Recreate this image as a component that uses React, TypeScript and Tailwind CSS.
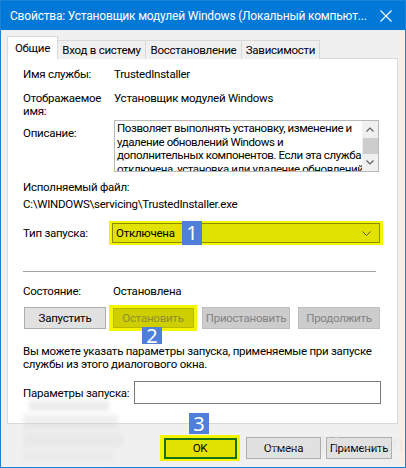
import React from "react";

const Badge = ({ n, className }: { n: string; className: string }) => (
  <div
    className={
      "absolute z-20 bg-[#4f7fd9] text-white text-[20px] leading-none flex items-center justify-center font-['Noto_Sans',sans-serif] tracking-normal " +
      className
    }
  >
    {n}
  </div>
);

const Btn = ({ label, disabled, className }: { label: string; disabled?: boolean; className: string }) => (
  <div
    className={
      "h-[22px] flex items-center justify-center border whitespace-nowrap " +
      (disabled
        ? "bg-[#cccccc] border-[#bfbfbf] text-[#838383] "
        : "bg-[#e1e1e1] border-[#adadad] text-black ") +
      className
    }
  >
    {label}
  </div>
);

export default function App() {
  return (
    <div className="w-[406px] h-[468px] bg-[#f0f0f0] border border-[#1883d7] flex flex-col relative overflow-hidden font-['Roboto',sans-serif] text-[11.5px] tracking-[-0.25px] text-black leading-[16px] whitespace-nowrap">
      {/* Title bar */}
      <div className="h-[29px] bg-[#0078d7] flex items-center justify-between pl-[9px] pr-[13px] text-white text-[12px] tracking-[-0.2px] shrink-0">
        <span className="whitespace-nowrap">Свойства: Установщик модулей Windows (Локальный компьют...</span>
        <svg width="12" height="12" viewBox="0 0 12 12" className="shrink-0">
          <path d="M0.5 0.5 L11.5 11.5 M11.5 0.5 L0.5 11.5" stroke="white" strokeWidth="1.1" />
        </svg>
      </div>

      {/* Body */}
      <div className="flex flex-col pl-[6px] pt-[6px]">
        {/* Tabs */}
        <div className="flex items-end h-[23px] relative z-10">
          <div className="w-[51px] h-[23px] bg-white border border-b-0 border-[#d9d9d9] flex items-start justify-center pt-[3px]">
            Общие
          </div>
          <div className="w-[88px] h-[19px] bg-[#f0f0f0] border border-l-0 border-b-0 border-[#d9d9d9] flex items-center justify-center">
            Вход в систему
          </div>
          <div className="w-[96px] h-[19px] bg-[#f0f0f0] border border-l-0 border-b-0 border-[#d9d9d9] flex items-center justify-center">
            Восстановление
          </div>
          <div className="w-[78px] h-[19px] bg-[#f0f0f0] border border-l-0 border-b-0 border-[#d9d9d9] flex items-center justify-center">
            Зависимости
          </div>
        </div>

        {/* Panel */}
        <div className="w-[391px] h-[366px] bg-white border border-[#d9d9d9] -mt-px flex flex-col pl-[15px] relative">
          {/* Имя службы */}
          <div className="flex mt-[7px] h-[16px] items-center">
            <div className="w-[91px]">Имя службы:</div>
            <div>TrustedInstaller</div>
          </div>
          {/* Отображаемое имя */}
          <div className="flex mt-[10px] leading-[13px]">
            <div className="w-[91px]">
              Отображаемое
              <br />
              имя:
            </div>
            <div>Установщик модулей Windows</div>
          </div>
          {/* Описание */}
          <div className="flex mt-[2px]">
            <div className="w-[91px] pt-[5px]">Описание:</div>
            <div className="w-[265px] h-[52px] border border-[#b9b9b9] flex overflow-hidden">
              <div className="flex-1 pl-[2px] pt-[1px] leading-[13.5px] tracking-[-0.4px] whitespace-nowrap overflow-hidden">
                Позволяет выполнять установку, изменение и
                <br />
                удаление обновлений Windows и
                <br />
                дополнительных компонентов. Если эта служба
                <br />
                отключена, установка или удаление обновлений
              </div>
              <div className="w-[16px] shrink-0 bg-[#f0f0f0] flex flex-col items-center">
                <div className="h-[17px] flex items-center justify-center">
                  <svg width="8" height="5" viewBox="0 0 8 5">
                    <path d="M0.5 4.5 L4 1 L7.5 4.5" stroke="#606060" strokeWidth="1.2" fill="none" />
                  </svg>
                </div>
                <div className="w-[15px] h-[17px] bg-[#cdcdcd]" />
                <div className="flex-1" />
                <div className="h-[17px] flex items-center justify-center">
                  <svg width="8" height="5" viewBox="0 0 8 5">
                    <path d="M0.5 0.5 L4 4 L7.5 0.5" stroke="#606060" strokeWidth="1.2" fill="none" />
                  </svg>
                </div>
              </div>
            </div>
          </div>
          {/* Исполняемый файл */}
          <div className="mt-[7px] h-[16px] flex items-center">Исполняемый файл:</div>
          <div className="mt-[1px] h-[16px] flex items-center">C:\WINDOWS\servicing\TrustedInstaller.exe</div>
          {/* Тип запуска */}
          <div className="flex items-center mt-[9px] h-[24px]">
            <div className="w-[86px]">Тип запуска:</div>
            <div className="w-[274px] h-[24px] bg-[#f5f500] px-[3px] py-[2px] relative">
              <div className="h-full bg-[#e2e200] border border-[#8c8c00] flex items-center justify-between pl-[3px] pr-[8px]">
                <span>Отключена</span>
                <svg width="9" height="5" viewBox="0 0 9 5">
                  <path d="M0.5 0.5 L4.5 4.5 L8.5 0.5" stroke="#5a5a20" strokeWidth="1" fill="none" />
                </svg>
              </div>
              <Badge n="1" className="left-[73px] top-[0px] w-[20px] h-[24px]" />
            </div>
          </div>
          {/* Separator */}
          <div className="mt-[26px] w-[353px] h-px bg-[#a0a0a0]" />
          {/* Состояние */}
          <div className="flex mt-[11px] h-[16px] items-center">
            <div className="w-[90px]">Состояние:</div>
            <div>Остановлена</div>
          </div>
          {/* Buttons */}
          <div className="flex items-center mt-[6px] h-[26px] relative">
            <Btn label="Запустить" className="w-[82px] ml-[1px]" />
            <div className="ml-[3px] w-[88px] h-[26px] bg-[#f5f500] flex items-center justify-center relative">
              <div className="w-[81px] h-[20px] bg-[#cfcf00] border border-[#b8b800] text-[#8e8e3a] flex items-center justify-center">
                Остановить
              </div>
              <Badge n="2" className="left-[33px] top-[22px] w-[20px] h-[17px] text-[18px]" />
            </div>
            <Btn label="Приостановить" disabled className="w-[88px] ml-[5px]" />
            <Btn label="Продолжить" disabled className="w-[82px] ml-[8px]" />
          </div>
          {/* Info text */}
          <div className="mt-[14px] leading-[13px]">
            Вы можете указать параметры запуска, применяемые при запуске
            <br />
            службы из этого диалогового окна.
          </div>
          {/* Параметры запуска */}
          <div className="flex items-center mt-[10px]">
            <div className="w-[111px]">Параметры запуска:</div>
            <div className="w-[247px] h-[23px] border border-[#7a7a7a] bg-white" />
          </div>
        </div>

        {/* Bottom buttons */}
        <div className="flex items-center mt-[11px] h-[26px] relative">
          <div className="ml-[153px] w-[80px] h-[26px] bg-[#f5f500] flex items-center justify-center relative">
            <div className="w-[73px] h-[21px] bg-[#e2e200] border-2 border-[#176f17] flex items-center justify-center">
              OK
            </div>
            <Badge n="3" className="left-[29px] top-[-22px] w-[20px] h-[21px]" />
          </div>
          <Btn label="Отмена" className="w-[75px] ml-[6px]" />
          <Btn label="Применить" className="w-[66px] ml-[5px]" />
          <div className="absolute left-[258px] top-[0px] text-[21px] font-bold text-[#e2e2e2] opacity-40 pointer-events-none tracking-[1px]">
            user-life.com
          </div>
        </div>
      </div>

      {/* blurred artifact */}
      <div className="absolute left-[22px] top-[400px] w-[105px] h-[64px] pointer-events-none opacity-40 blur-[2px] flex flex-col gap-[4px]">
        <div className="h-[10px] w-[80px] ml-[6px] bg-[#d0d0d0]" />
        <div className="h-[14px] w-[95px] bg-[#d8d8d8]" />
        <div className="h-[14px] w-[100px] bg-[#dedede]" />
        <div className="h-[10px] w-[90px] bg-[#e2e2e2]" />
      </div>
    </div>
  );
}
